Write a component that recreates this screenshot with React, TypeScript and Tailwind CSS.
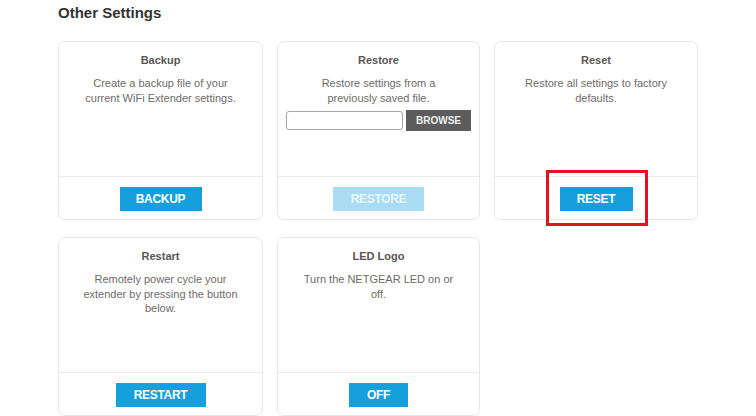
import React from "react";

type CardProps = {
  title: string;
  desc: React.ReactNode;
  children?: React.ReactNode;
  button: React.ReactNode;
};

function Card({ title, desc, children, button }: CardProps) {
  return (
    <div className="flex h-[179px] flex-col rounded-[7px] border border-[#e6e6e6] bg-white">
      <div className="flex flex-1 flex-col items-center px-2 pt-[11px]">
        <div className="text-[11px] font-bold leading-[14px] text-[#5a5555]">{title}</div>
        <div className="mt-[9px] text-center text-[11px] leading-[14.5px] text-[#6e6a6a]">{desc}</div>
        {children}
      </div>
      <div className="relative flex h-[43px] items-center justify-center border-t border-[#ececec] pt-[1px]">
        {button}
      </div>
    </div>
  );
}

function Btn({ label, w, light }: { label: string; w: number; light?: boolean }) {
  return (
    <div
      className={
        "flex h-[24px] items-center justify-center text-[12px] font-bold tracking-[-0.3px] " +
        (light ? "bg-[#a9dcf2] text-[#e9f6fc]" : "bg-[#159fdc] text-white")
      }
      style={{ width: w }}
    >
      {label}
    </div>
  );
}

export default function App() {
  return (
    <div
      className="h-[416px] w-[756px] overflow-hidden bg-white pl-[58px] pt-[4px]"
      style={{ fontFamily: '"Liberation Sans", Arial, sans-serif' }}
    >
      <div className="text-[15px] font-bold leading-[18px] text-[#333]">Other Settings</div>
      <div className="mt-[19px] grid w-[640px] grid-cols-[205px_203px_204px] gap-x-[14px] gap-y-[17px]">
        <Card
          title="Backup"
          desc={<>Create a backup file of your<br />current WiFi Extender settings.</>}
          button={<Btn label="BACKUP" w={82} />}
        />
        <Card
          title="Restore"
          desc={<>Restore settings from a<br />previously saved file.</>}
          button={<Btn label="RESTORE" w={91} light />}
        >
          <div className="mt-[5px] flex w-full items-center justify-center gap-[3px]">
            <div className="h-[19px] w-[117px] rounded-[3px] border-[1.5px] border-[#a5a5a5] bg-white" />
            <div className="flex h-[21px] w-[65px] items-center justify-center bg-[#5c5c5c] text-[10px] font-bold text-[#eee]">
              BROWSE
            </div>
          </div>
        </Card>
        <Card
          title="Reset"
          desc={<>Restore all settings to factory<br />defaults.</>}
          button={
            <>
              <Btn label="RESET" w={73} />
              <div className="absolute left-[51px] top-[-7px] h-[56px] w-[102px] border-[3px] border-[#e0141e]" />
            </>
          }
        />
        <Card
          title="Restart"
          desc={<>Remotely power cycle your<br />extender by pressing the button<br />below.</>}
          button={<Btn label="RESTART" w={90} />}
        />
        <Card
          title="LED Logo"
          desc={<>Turn the NETGEAR LED on or<br />off.</>}
          button={<Btn label="OFF" w={59} />}
        />
      </div>
    </div>
  );
}
